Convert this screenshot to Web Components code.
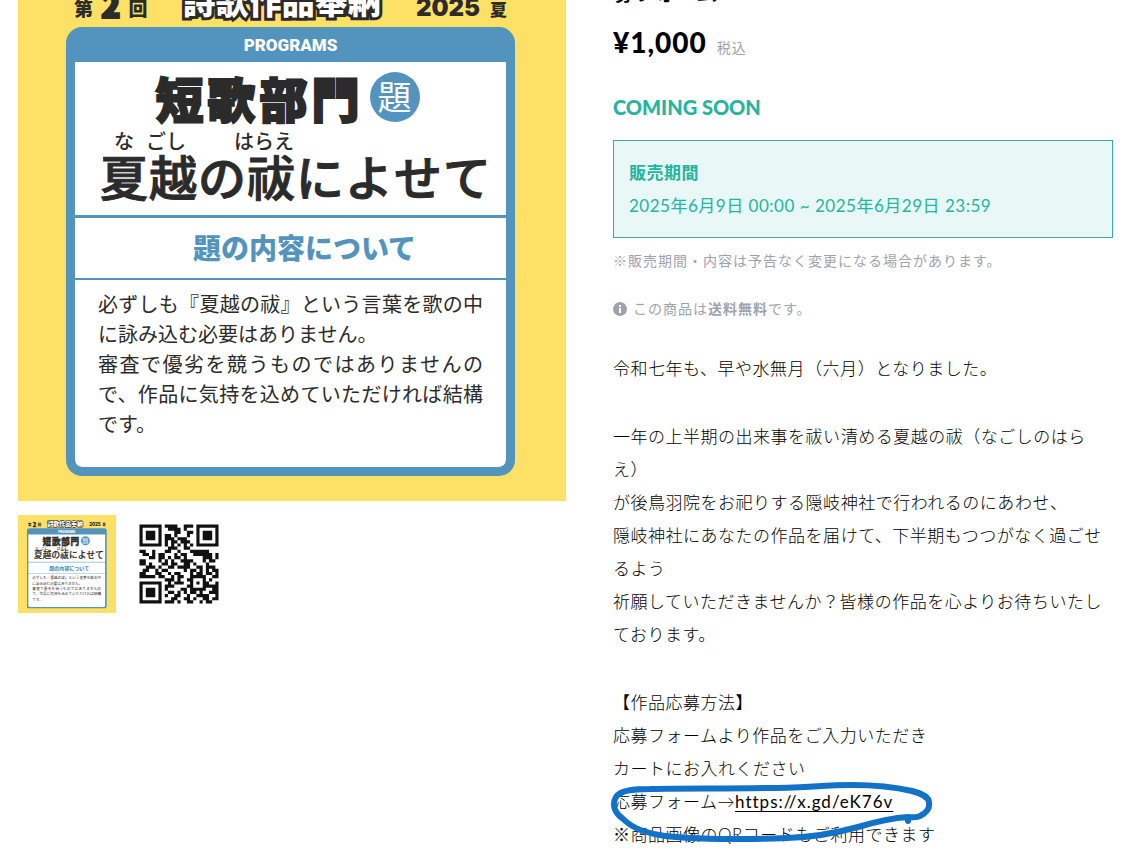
<!DOCTYPE html>
<html lang="ja">
<head>
<meta charset="utf-8">
<title>短歌部門 応募フォーム</title>
<style>
  html { overflow: hidden; }
  body { margin: 0; background: #fff; color: #000; font-family: Lato, "Noto Sans CJK JP", sans-serif; }
</style>
</head>
<body>
<product-page></product-page>

<script>
const define = (name, html, setup) => customElements.define(name, class extends HTMLElement {
  constructor() {
    super();
    this.attachShadow({ mode: 'open' }).innerHTML = html;
    if (setup) setup(this.shadowRoot);
  }
});

/* The square poster shown as the product picture */
define('contest-poster', `
<style>
  :host { display: flex; flex-direction: column; box-sizing: border-box; aspect-ratio: 1; padding: 0 51px 25px 48px;
    background: #fce166; color: #2b2b2b; font-family: "Noto Sans CJK JP", sans-serif; }
  header { display: flex; justify-content: space-between; align-items: flex-end; height: 64px; padding: 0 8px 10px; font-weight: 900; line-height: 1; white-space: nowrap; }
  .no, .year { display: flex; align-items: flex-end; gap: 8px; font-size: 19px; }
  .no b { font-size: 32px; -webkit-text-stroke: 2px #2b2b2b; line-height: 26px; }
  .year { gap: 10px; font-size: 17px; }
  .year b { font-size: 24px; line-height: 18px; font-family: Inter, sans-serif; }
  .title { font-size: 33px; color: #fff; -webkit-text-stroke: 6px #2b2b2b; paint-order: stroke fill; stroke-linejoin: round; line-height: 34px; }
  .card { flex: 1; display: flex; flex-direction: column; border: 9px solid #5394bf; border-top: 0; border-radius: 16px; background: #5394bf; overflow: hidden; }
  .bar { height: 35px; display: flex; align-items: center; justify-content: center; color: #fff; font: 900 17px Roboto, sans-serif; }
  .sheet { flex: 1; background: #fff; border-radius: 0 0 7px 7px; }
  .theme { height: 153px; border-bottom: 3px solid #5394bf; }
  .genre { display: flex; justify-content: center; align-items: center; gap: 6px; height: 70px; padding-right: 6px; }
  h2 { margin: 0; font-size: 48px; font-weight: 900; line-height: 66px; letter-spacing: 4px; -webkit-text-stroke: 2px #2b2b2b; }
  .dai { width: 50px; height: 50px; border-radius: 50%; background: #5394bf; color: #fff; font-size: 34px; line-height: 48px; text-align: center; }
  .kana { display: flex; padding-left: 39px; font-size: 20px; line-height: 18px; font-weight: 500; }
  .kana span:nth-child(1) { margin-right: 12px; }
  .kana span:nth-child(2) { margin-right: 48px; }
  .kotoba { font-size: 48px; line-height: 50px; font-weight: 500; letter-spacing: 1px; padding-left: 25px; white-space: nowrap; -webkit-text-stroke: 1px #2b2b2b; }
  h3 { margin: 0; padding-left: 28px; height: 60px; line-height: 58px; border-bottom: 2px solid #5394bf; text-align: center; color: #5394bf; font-size: 28px; font-weight: 900; }
  p { margin: 0 23px; font-size: 20px; line-height: 30px; text-align: justify; }
  p:first-of-type { padding-top: 9px; }
</style>
<header>
  <span class="no">第<b>2</b>回</span><span class="title">詩歌作品奉納</span><span class="year"><b>2025</b>夏</span>
</header>
<section class="card">
  <div class="bar">PROGRAMS</div>
  <div class="sheet">
    <div class="theme">
      <div class="genre"><h2>短歌部門</h2><span class="dai">題</span></div>
      <div class="kana"><span>な</span><span>ごし</span><span>はらえ</span></div>
      <div class="kotoba">夏越の祓によせて</div>
    </div>
    <h3>題の内容について</h3>
    <p>必ずしも『夏越の祓』という言葉を歌の中に詠み込む必要はありません。</p>
    <p>審査で優劣を競うものではありませんので、作品に気持を込めていただければ結構です。</p>
  </div>
</section>`);

/* QR code drawn from its rows of modules */
define('qr-code', `
<style>:host { display: block; } svg { display: block; width: 100%; }</style>
<svg viewBox="-3 -3 31 31" role="img" aria-label="QR"><path fill="#111"/></svg>`, root => {
  const rows = [
    '1111111011110011101111111',
    '1000001001111010001000001',
    '1011101000011001101011101',
    '1011101011010001001011101',
    '1011101011101110001011101',
    '1000001010110111001000001',
    '1111111010101010101111111',
    '0000000001110011000000000',
    '1100100011001000111111000',
    '0110101100010110011111101',
    '0001101101011010000011101',
    '1100001010100111100010110',
    '1101000110110011010001000',
    '0011101001101111001101110',
    '0110010110000010110101011',
    '1100011001011000101101101',
    '1111101100101100111110011',
    '0000000011101001100010100',
    '1111111001011100101011001',
    '1000001011100001100011111',
    '1011101010000110111110011',
    '1011101001101010110100111',
    '1011101010011001001111001',
    '1000001000110011010011011',
    '1111111011101001100101100'];
  root.querySelector('path').setAttribute('d', rows.flatMap((row, y) =>
    [...row.matchAll(/1+/g)].map(run => `M${run.index} ${y}h${run[0].length}v1h-${run[0].length}z`)).join(''));
});

/* Main picture and the thumbnails under it */
define('product-gallery', `
<style>
  :host { display: block; }
  .main { margin-top: -47px; }
  .thumbs { display: flex; gap: 14px; margin-top: 14px; }
  button { width: 98px; height: 98px; padding: 0; border: 0; background: none; display: block; }
  svg { display: block; width: 98px; height: 98px; }
</style>
<contest-poster class="main"></contest-poster>
<div class="thumbs">
  <button aria-label="1"><svg viewBox="0 0 548 548"><foreignObject width="548" height="548"><contest-poster></contest-poster></foreignObject></svg></button>
  <button aria-label="2"><qr-code></qr-code></button>
</div>`);

/* Outlined box with a heading and one line of text */
define('sale-period', `
<style>
  :host { display: block; border: 1px solid #3fa99a; background: #e9f7f6; color: #23b5a0; padding: 15px; font-size: 17px; line-height: 33px; letter-spacing: .03em; }
  strong { display: block; }
</style>
<strong><slot name="label"></slot></strong><slot></slot>`);

/* Small grey remark, with an optional leading icon */
define('small-note', `
<style>:host { display: flex; align-items: center; color: #9ca3af; font-size: 14px; line-height: 20px; letter-spacing: 1px; }</style>
<slot name="icon"></slot><span><slot></slot></span>`);

/* Description text with the marked form link */
define('product-description', `
<style>
  :host { display: flex; flex-direction: column; gap: 35px; font-size: 17px; line-height: 33px; letter-spacing: .03em; font-weight: 300; }
  p { margin: 0; }
  a { color: inherit; font-weight: 400; letter-spacing: 1px; text-underline-offset: 3px; }
  .marked { position: relative; }
  svg { position: absolute; left: -4px; bottom: 7px; width: 330px; height: 64px; fill: none; stroke: #1272c8; stroke-width: 6; stroke-linecap: round; stroke-linejoin: round; pointer-events: none; }
</style>
<p>令和七年も、早や水無月（六月）となりました。</p>
<p>一年の上半期の出来事を祓い清める夏越の祓（なごしのはらえ）<br>が後鳥羽院をお祀りする隠岐神社で行われるのにあわせ、<br>隠岐神社にあなたの作品を届けて、下半期もつつがなく過ごせるよう<br>祈願していただきませんか？皆様の作品を心よりお待ちいたしております。</p>
<p class="marked">【作品応募方法】<br>応募フォームより作品をご入力いただき<br>カートにお入れください<br>応募フォーム→<a href="https://x.gd/eK76v">https://x.gd/eK76v</a><br>※商品画像のQRコードもご利用できます
<svg viewBox="609 780 330 64" aria-hidden="true"><path d="M908 821 L908 817 C913 817 917 818 920 816 C926 813 930 809 929 803 C929 797 923 794 912 791 C890 786 870 785 853 785 C825 785 800 788 767 788 C720 789 690 788 650 789 C635 789 620 790 616 797 C612 804 614 812 622 818 C628 824 634 828 643 831 C658 836 672 837 690 838 C720 839 745 840 787 838 C815 837 840 832 858 827 C875 822 890 818 908 817"/></svg></p>`);

define('product-page', `
<style>
  :host { display: grid; grid-template-columns: minmax(0, 548fr) minmax(0, 500fr); gap: 47px; align-items: start; padding: 0 22px 0 18px; }
  .info { display: flex; flex-direction: column; }
  h1 { margin: -25px 0 0; font-size: 21px; line-height: 34px; }
  .price { display: flex; align-items: baseline; gap: 10px; margin-top: 13px; line-height: 40px; }
  .price strong { font-size: 28px; font-weight: 900; letter-spacing: 1px; }
  .price span { font-size: 14px; letter-spacing: 1px; color: #9ca3af; }
  .soon { margin: 24px 0 18px; font-size: 20px; line-height: 30px; font-weight: 900; color: #23b5a0; }
  .period { margin-top: 13px; }
  .shipping { margin: 28px 0 33px; }
  svg { width: 14px; height: 14px; margin-right: 6px; display: block; }
</style>
<product-gallery></product-gallery>
<main class="info">
  <h1>募フォーム</h1>
  <div class="price"><strong>¥1,000</strong><span>税込</span></div>
  <div class="soon">COMING SOON</div>
  <sale-period><span slot="label">販売期間</span>2025年6月9日 00:00 ~ 2025年6月29日 23:59</sale-period>
  <small-note class="period">※販売期間・内容は予告なく変更になる場合があります。</small-note>
  <small-note class="shipping"><svg slot="icon" viewBox="0 0 14 14" aria-hidden="true"><circle cx="7" cy="7" r="7" fill="#9ca3af"/><path d="M6 3h2v2H6zM6 6h2v5H6z" fill="#fff"/></svg>この商品は<b>送料無料</b>です。</small-note>
  <product-description></product-description>
</main>`);
</script>
</body>
</html>
